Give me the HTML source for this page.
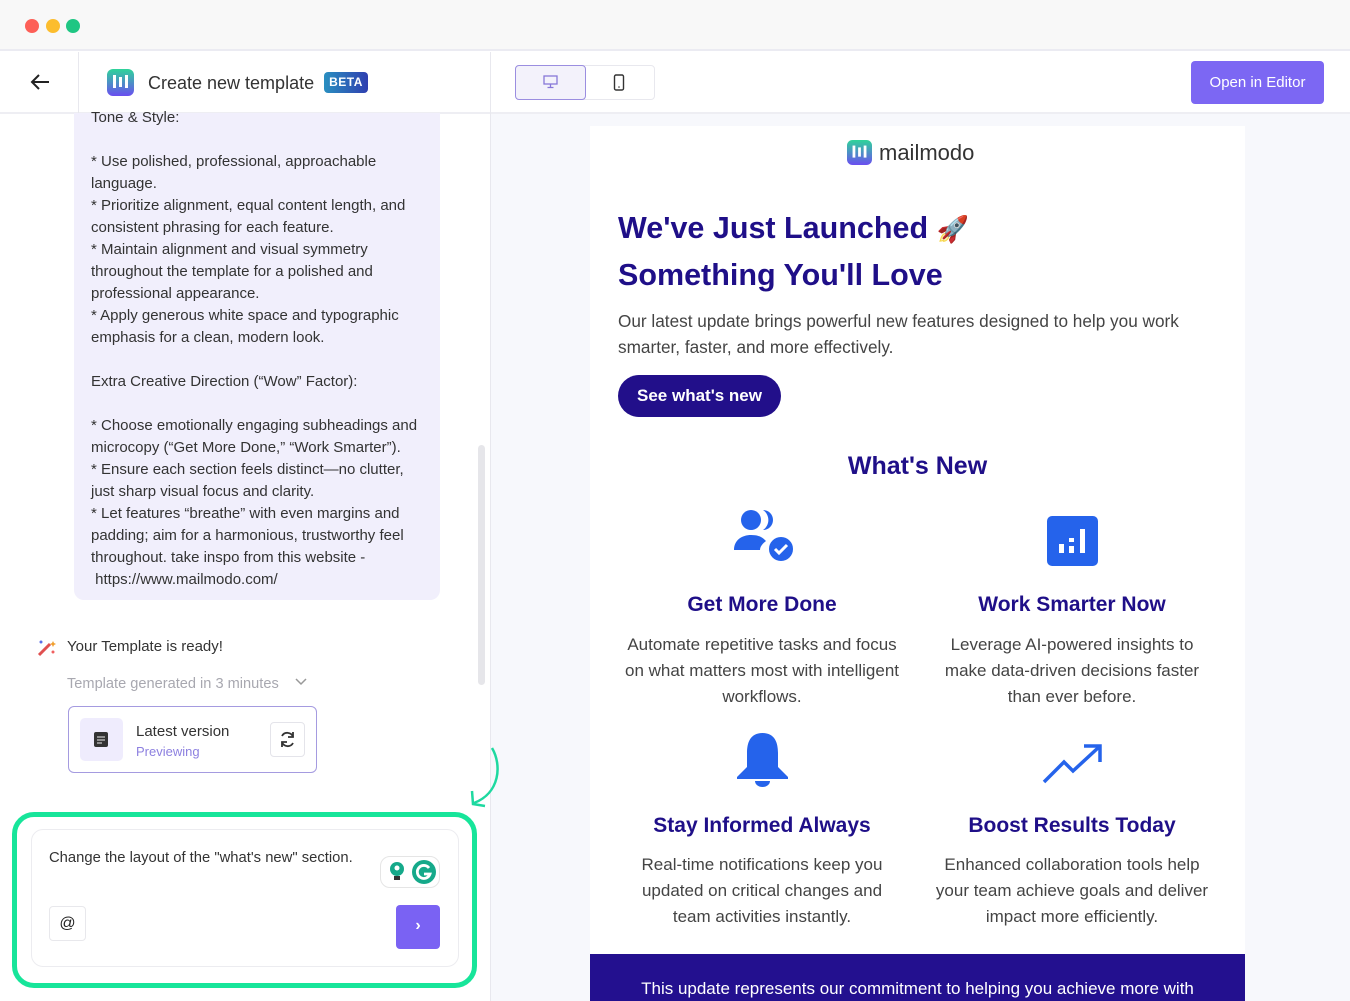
<!DOCTYPE html>
<html><head><meta charset="utf-8"><style>
*{margin:0;padding:0;box-sizing:border-box}
body{width:1350px;height:1001px;overflow:hidden;background:#fff;font-family:"Liberation Sans",sans-serif;position:relative}
.a{position:absolute}
.lt{font-size:15px;color:#333;line-height:22px;white-space:nowrap}
.em{color:#1f0f88;font-weight:bold}
.c{text-align:center;white-space:nowrap}
.desc{font-size:17px;color:#444;line-height:26px}
</style></head><body>
<!-- top chrome -->
<div class="a" style="left:0;top:0;width:1350px;height:51px;background:#f8f8f8;border-bottom:2px solid #ebebf2"></div>
<div class="a" style="left:25px;top:19px;width:14px;height:14px;border-radius:50%;background:#fd5f57"></div>
<div class="a" style="left:46px;top:19px;width:14px;height:14px;border-radius:50%;background:#fcbd2e"></div>
<div class="a" style="left:66px;top:19px;width:14px;height:14px;border-radius:50%;background:#1fc683"></div>
<!-- header -->
<div class="a" style="left:0;top:112px;width:1350px;height:2px;background:#eeeef3"></div>
<div class="a" style="left:78px;top:52px;width:1px;height:61px;background:#e8e8ee"></div>
<svg class="a" style="left:29px;top:72px" width="22" height="20" viewBox="0 0 22 20"><path d="M20 10H3M10 3L3 10l7 7" fill="none" stroke="#222" stroke-width="2"/></svg>
<svg class="a" style="left:107px;top:69px" width="27" height="27" viewBox="0 0 27 27"><defs><linearGradient id="g" x1="0" y1="0" x2="0" y2="1"><stop offset="0" stop-color="#2fd49a"/><stop offset="1" stop-color="#6a4ef0"/></linearGradient></defs><rect width="27" height="27" rx="6" fill="url(#g)"/><rect x="6" y="6" width="3" height="13" fill="#fff"/><rect x="12" y="8" width="3" height="10" fill="#fff"/><rect x="18" y="6" width="3" height="13" fill="#fff"/></svg>
<div class="a" style="left:148px;top:73px;font-size:18px;color:#333">Create new template</div>
<div class="a" style="left:324px;top:72px;width:44px;height:21px;border-radius:4px;background:linear-gradient(90deg,#2a8fc0,#2f3fb0);color:#fff;font-size:12px;font-weight:bold;text-align:center;line-height:21px;letter-spacing:0.5px">BETA</div>
<!-- preview area -->
<div class="a" style="left:491px;top:114px;width:859px;height:887px;background:#f7f8fc"></div>
<div class="a" style="left:490px;top:52px;width:1px;height:949px;background:#e8e8ee"></div>
<!-- device toggle -->
<div class="a" style="left:515px;top:65px;width:140px;height:35px;border:1px solid #e8e8ee;border-radius:4px"></div>
<div class="a" style="left:515px;top:65px;width:71px;height:35px;border:1.5px solid #9b8ee0;border-radius:4px;background:#f3f2fb"></div>
<svg class="a" style="left:543px;top:75px" width="15" height="14" viewBox="0 0 15 14"><rect x="1" y="1" width="13" height="8" fill="none" stroke="#8878d8" stroke-width="1.3"/><path d="M7.5 9v3M4.5 12.5h6" stroke="#8878d8" stroke-width="1.3"/></svg>
<svg class="a" style="left:613px;top:74px" width="12" height="17" viewBox="0 0 12 17"><rect x="1.5" y="1" width="9" height="15" rx="1.5" fill="none" stroke="#333" stroke-width="1.4"/><circle cx="6" cy="13" r="0.8" fill="#333"/></svg>
<div class="a" style="left:1191px;top:61px;width:133px;height:43px;border-radius:4px;background:#7c67f3;color:#fff;font-size:15px;text-align:center;line-height:43px">Open in Editor</div>
<!-- left chat bubble -->
<div class="a" style="left:74px;top:113px;width:366px;height:487px;background:#f1effc;border-radius:0 0 10px 10px"></div>
<div class="a lt" style="left:91px;top:107px">Tone &amp; Style:<br><br>* Use polished, professional, approachable<br>language.<br>* Prioritize alignment, equal content length, and<br>consistent phrasing for each feature.<br>* Maintain alignment and visual symmetry<br>throughout the template for a polished and<br>professional appearance.<br>* Apply generous white space and typographic<br>emphasis for a clean, modern look.<br><br>Extra Creative Direction (“Wow” Factor):<br><br>* Choose emotionally engaging subheadings and<br>microcopy (“Get More Done,” “Work Smarter”).<br>* Ensure each section feels distinct—no clutter,<br>just sharp visual focus and clarity.<br>* Let features “breathe” with even margins and<br>padding; aim for a harmonious, trustworthy feel<br>throughout. take inspo from this website -<br>&nbsp;https://www.mailmodo.com/</div>
<div class="a" style="left:478px;top:445px;width:7px;height:240px;border-radius:4px;background:#e6e6ea"></div>
<svg class="a" style="left:35px;top:638px" width="22" height="20" viewBox="0 0 22 20"><path d="M4 17L15 6" stroke="#e05050" stroke-width="3"/><circle cx="6" cy="4" r="1.5" fill="#5a6ee8"/><circle cx="18" cy="14" r="1.5" fill="#f06060"/><path d="M18 3l1 2 2 1-2 1-1 2-1-2-2-1 2-1z" fill="#f0a030"/></svg>
<div class="a" style="left:67px;top:638px;font-size:15px;color:#333">Your Template is ready!</div>
<div class="a" style="left:67px;top:676px;font-size:14.6px;color:#a8a8b0">Template generated in 3 minutes</div>
<svg class="a" style="left:294px;top:677px" width="14" height="10" viewBox="0 0 14 10"><path d="M2 2l5 5 5-5" fill="none" stroke="#999" stroke-width="1.5"/></svg>
<div class="a" style="left:68px;top:706px;width:249px;height:67px;border:1.5px solid #a59be0;border-radius:6px"></div>
<div class="a" style="left:80px;top:718px;width:43px;height:43px;border-radius:5px;background:#efecfd"></div>
<svg class="a" style="left:93px;top:731px" width="16" height="17" viewBox="0 0 16 17"><rect x="1" y="1" width="14" height="15" rx="2" fill="#333"/><path d="M4 6h8M4 9h8M4 12h5" stroke="#eee" stroke-width="1"/></svg>
<div class="a" style="left:136px;top:723px;font-size:15px;color:#333">Latest version</div>
<div class="a" style="left:136px;top:744px;font-size:13px;color:#8d80e0">Previewing</div>
<div class="a" style="left:270px;top:722px;width:35px;height:35px;border:1px solid #e4e4ea;border-radius:4px"></div>
<svg class="a" style="left:278px;top:730px" width="19" height="19" viewBox="0 0 19 19"><path d="M15 7A6 6 0 0 0 4 6M4 12a6 6 0 0 0 11 1" fill="none" stroke="#333" stroke-width="1.8"/><path d="M15 2v5h-5M4 17v-5h5" fill="none" stroke="#333" stroke-width="1.8"/></svg>
<svg class="a" style="left:468px;top:745px" width="36" height="65" viewBox="0 0 36 65"><path d="M24 3C34 20 32 48 6 58" fill="none" stroke="#1ed9a0" stroke-width="2.5"/><path d="M4 46L5 59 17 61" fill="none" stroke="#1ed9a0" stroke-width="2.5"/></svg>
<div class="a" style="left:12px;top:812px;width:465px;height:176px;border:5px solid #17e59a;border-radius:22px"></div>
<div class="a" style="left:31px;top:829px;width:428px;height:138px;border:1.5px solid #ececf0;border-radius:12px"></div>
<div class="a" style="left:49px;top:850px;font-size:14.8px;color:#333">Change the layout of the "what's new" section.</div>
<div class="a" style="left:380px;top:856px;width:60px;height:32px;border:1px solid #e5e5e5;border-radius:10px;background:#fff"></div>
<svg class="a" style="left:386px;top:860px" width="22" height="24" viewBox="0 0 22 24"><circle cx="11" cy="9" r="7" fill="#15a98a"/><circle cx="11" cy="8" r="2.5" fill="#fff"/><rect x="8" y="16" width="6" height="4" fill="#333"/></svg>
<svg class="a" style="left:410px;top:859px" width="28" height="26" viewBox="0 0 28 26"><circle cx="14" cy="13" r="12" fill="#15a98a"/><path d="M19 9a6.5 6.5 0 1 0 1 6h-6" fill="none" stroke="#fff" stroke-width="2.8"/></svg>
<div class="a" style="left:49px;top:906px;width:37px;height:35px;border:1px solid #e8e8ec;border-radius:4px;text-align:center;line-height:34px;font-size:16px;color:#222">@</div>
<div class="a" style="left:396px;top:905px;width:44px;height:44px;border-radius:4px;background:#7a62f3;color:#fff;text-align:center;line-height:42px;font-size:16px;font-weight:bold">›</div>
<!-- email -->
<div class="a" style="left:590px;top:126px;width:655px;height:875px;background:#fff"></div>
<svg class="a" style="left:847px;top:140px" width="25" height="25" viewBox="0 0 27 27"><defs><linearGradient id="g2" x1="0" y1="0" x2="0" y2="1"><stop offset="0" stop-color="#2fd49a"/><stop offset="1" stop-color="#6a4ef0"/></linearGradient></defs><rect width="27" height="27" rx="6" fill="url(#g2)"/><rect x="6" y="6" width="3" height="13" fill="#fff"/><rect x="12" y="8" width="3" height="10" fill="#fff"/><rect x="18" y="6" width="3" height="13" fill="#fff"/></svg>
<div class="a" style="left:879px;top:140px;font-size:22px;color:#333">mailmodo</div>
<div class="a em" style="left:618px;top:205px;font-size:30.5px;line-height:46px;white-space:nowrap">We've Just Launched <span style="font-size:26px">🚀</span><br>Something You'll Love</div>
<div class="a" style="left:618px;top:308px;font-size:17.2px;line-height:26px;color:#444;white-space:nowrap">Our latest update brings powerful new features designed to help you work<br>smarter, faster, and more effectively.</div>
<div class="a" style="left:618px;top:375px;width:163px;height:42px;border-radius:21px;background:#220f8a;color:#fff;font-weight:bold;font-size:17px;text-align:center;line-height:42px">See what's new</div>
<div class="a em c" style="left:590px;width:655px;top:452px;font-size:25px">What's New</div>
<!-- icons -->
<svg class="a" style="left:734px;top:507px" width="62" height="57" viewBox="0 0 62 57"><circle cx="17" cy="13" r="10" fill="#2563eb"/><path d="M29 3a10 10 0 0 1 0 20a12 12 0 0 0 0-20z" fill="#2563eb"/><path d="M0 43c0-10 8-15 17-15s12 3 15 6c-4 3-6 6-6 9z" fill="#2563eb"/><circle cx="47" cy="42" r="13" fill="#2563eb" stroke="#fff" stroke-width="2"/><path d="M41 42l4 4 8-8" fill="none" stroke="#fff" stroke-width="3"/></svg>
<svg class="a" style="left:1047px;top:516px" width="51" height="50" viewBox="0 0 51 50"><rect width="51" height="50" rx="5" fill="#2563eb"/><rect x="12" y="28" width="5" height="9" fill="#fff"/><rect x="22" y="22" width="5" height="4" fill="#fff"/><rect x="22" y="30" width="5" height="7" fill="#fff"/><rect x="33" y="13" width="5" height="24" fill="#fff"/></svg>
<svg class="a" style="left:737px;top:733px" width="51" height="54" viewBox="0 0 51 54"><path d="M25.5 0C13 0 10 10 10 20v14L0 44v2h51v-2L41 34V20C41 10 38 0 25.5 0z" fill="#2563eb"/><path d="M18 48a7.5 6 0 0 0 15 0z" fill="#2563eb"/></svg>
<svg class="a" style="left:1042px;top:743px" width="62" height="42" viewBox="0 0 62 42"><path d="M2 39L22 19 31 28 57 4" fill="none" stroke="#2563eb" stroke-width="3.5"/><path d="M42 3H58V19" fill="none" stroke="#2563eb" stroke-width="3.5"/></svg>
<div class="a em c" style="left:612px;width:300px;top:593px;font-size:21px">Get More Done</div>
<div class="a em c" style="left:922px;width:300px;top:593px;font-size:21px">Work Smarter Now</div>
<div class="a desc c" style="left:612px;width:300px;top:632px">Automate repetitive tasks and focus<br>on what matters most with intelligent<br>workflows.</div>
<div class="a desc c" style="left:922px;width:300px;top:632px">Leverage AI-powered insights to<br>make data-driven decisions faster<br>than ever before.</div>
<div class="a em c" style="left:612px;width:300px;top:814px;font-size:21px">Stay Informed Always</div>
<div class="a em c" style="left:922px;width:300px;top:814px;font-size:21px">Boost Results Today</div>
<div class="a desc c" style="left:612px;width:300px;top:852px">Real-time notifications keep you<br>updated on critical changes and<br>team activities instantly.</div>
<div class="a desc c" style="left:922px;width:300px;top:852px">Enhanced collaboration tools help<br>your team achieve goals and deliver<br>impact more efficiently.</div>
<div class="a" style="left:590px;top:954px;width:655px;height:47px;background:#23108f"></div>
<div class="a c" style="left:590px;width:655px;top:979px;font-size:17px;color:#fff">This update represents our commitment to helping you achieve more with</div>
</body></html>
